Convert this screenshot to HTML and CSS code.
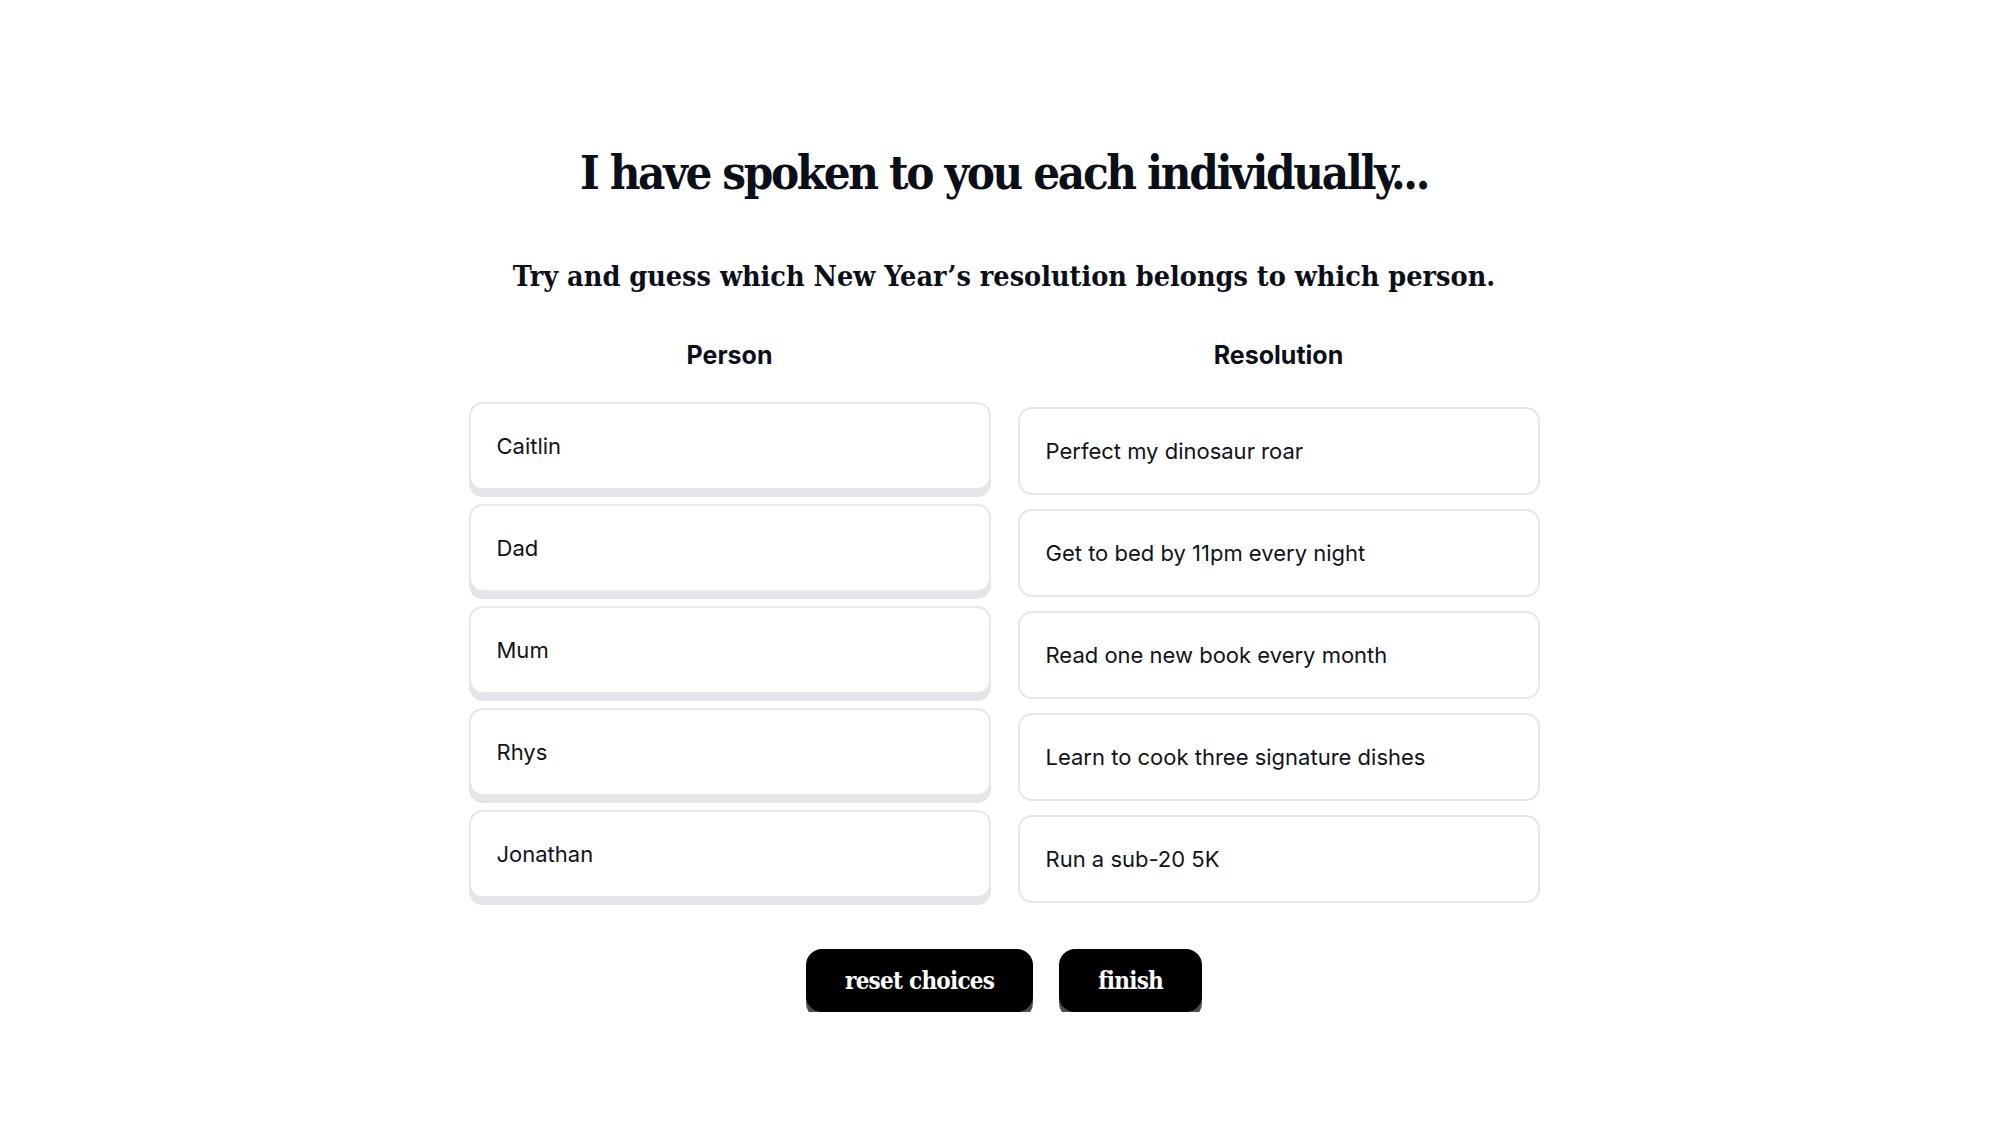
FILE: index.html
```html
<!DOCTYPE html>
<html lang="en">
<head>
<meta charset="utf-8">
<title>New Year's resolutions</title>
<link rel="stylesheet" href="styles.css">
</head>
<body>
<main class="page">
  <h1 class="title">I have spoken to you each individually...</h1>
  <h2 class="subtitle">Try and guess which New Year’s resolution belongs to which person.</h2>
  <div class="board">
    <section class="col">
      <h3 class="col-head">Person</h3>
      <ul class="list">
        <li class="card card--person">Caitlin</li>
        <li class="card card--person">Dad</li>
        <li class="card card--person">Mum</li>
        <li class="card card--person">Rhys</li>
        <li class="card card--person">Jonathan</li>
      </ul>
    </section>
    <section class="col">
      <h3 class="col-head">Resolution</h3>
      <ul class="list">
        <li class="card">Perfect my dinosaur roar</li>
        <li class="card">Get to bed by 11pm every night</li>
        <li class="card">Read one new book every month</li>
        <li class="card">Learn to cook three signature dishes</li>
        <li class="card">Run a sub-20 5K</li>
      </ul>
    </section>
  </div>
  <div class="actions">
    <button class="btn" type="button">reset choices</button>
    <button class="btn" type="button">finish</button>
  </div>
</main>
</body>
</html>
```

FILE: styles.css
```css
html, body {
  margin: 0;
  padding: 0;
  background: #ffffff;
}

body {
  font-family: Inter, "Noto Sans", sans-serif;
  color: #0d111a;
}

.page {
  display: flex;
  flex-direction: column;
  align-items: center;
  padding-top: 143px;
}

.title {
  margin: 0;
  font-family: "DejaVu Serif Condensed", "DejaVu Serif", serif;
  font-stretch: condensed;
  font-weight: 700;
  font-size: 47px;
  letter-spacing: -2.35px;
  line-height: 60px;
  color: #0b0f1a;
  text-align: center;
}

.subtitle {
  margin: 55px 0 0;
  font-family: "DejaVu Serif Condensed", "DejaVu Serif", serif;
  font-stretch: condensed;
  font-weight: 700;
  font-size: 28.5px;
  line-height: 36px;
  color: #0b0f1a;
  text-align: center;
}

.board {
  margin-top: 46px;
  display: grid;
  grid-template-columns: 522px 522px;
  column-gap: 27px;
}

.col-head {
  margin: 0 0 37px;
  font-family: Inter, sans-serif;
  font-weight: 700;
  font-size: 25px;
  line-height: 30px;
  text-align: center;
  color: #0b0f1a;
}

.list {
  list-style: none;
  margin: 0;
  padding: 0;
  display: flex;
  flex-direction: column;
  gap: 14px;
}

.card {
  box-sizing: border-box;
  height: 88px;
  display: flex;
  align-items: center;
  padding: 0 26px;
  border: 2px solid #e6e7e9;
  border-radius: 14px;
  background: #ffffff;
  font-family: Inter, sans-serif;
  font-size: 22px;
  color: #111318;
}

.card--person {
  transform: translateY(-5px);
  box-shadow: 0 7px 0 #e3e5e8;
}

.actions {
  margin-top: 46px;
  display: flex;
  gap: 26px;
}

.btn {
  height: 63px;
  padding: 0 39px;
  border: none;
  border-radius: 16px;
  background: #000000;
  color: #ffffff;
  font-family: "DejaVu Serif Condensed", "DejaVu Serif", serif;
  font-stretch: condensed;
  font-weight: 700;
  font-size: 24px;
  letter-spacing: -0.75px;
  box-shadow: 0 7px 0 #4d4d4d;
  cursor: pointer;
}
```
